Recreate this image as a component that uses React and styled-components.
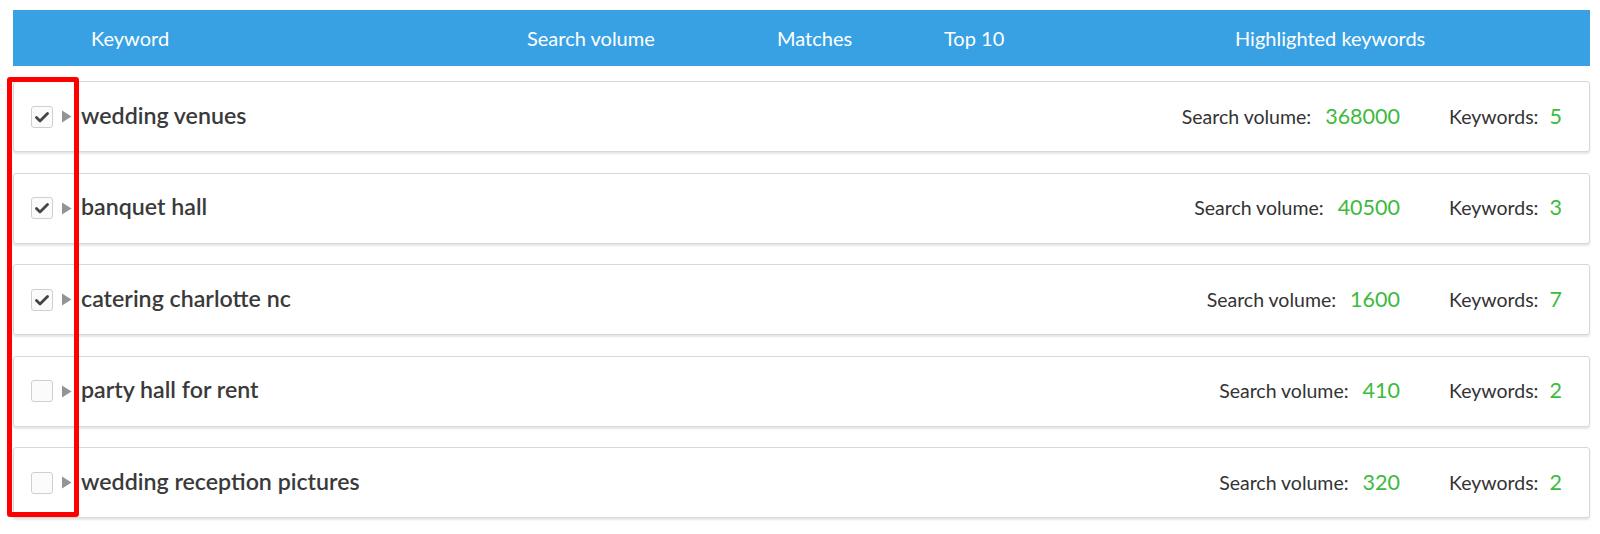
import React from 'react'
import styled, { createGlobalStyle } from 'styled-components'

const GlobalStyle = createGlobalStyle`
  body {
    margin: 0;
    background: #ffffff;
    font-family: "Lato", "Open Sans", sans-serif;
  }
`

const Page = styled.div`
  padding: 10px 10px 0 13px;
`

const Header = styled.div`
  display: grid;
  grid-template-columns: 514px 250px 167px 291px 1fr;
  align-items: center;
  height: 56px;
  background: #38a1e4;
  color: #ffffff;
  font-size: 20px;
`

const HeadCell = styled.div`
  padding-left: ${props => props.$indent || 0}px;
  white-space: nowrap;
`

const List = styled.div`
  position: relative;
  padding-top: 15px;
`

const Card = styled.div`
  display: flex;
  align-items: center;
  height: 71px;
  box-sizing: border-box;
  margin-bottom: 20.5px;
  padding: 0 29px 0 17px;
  background: #ffffff;
  border: 1px solid #d8d8d8;
  border-radius: 3px;
  box-shadow: 0 2px 2px rgba(0, 0, 0, 0.1);
`

const Checkbox = styled.span`
  display: flex;
  align-items: center;
  justify-content: center;
  width: 22px;
  height: 22px;
  box-sizing: border-box;
  border: 1px solid #cfcfcf;
  border-radius: 3px;
  background: #fbfbfb;
`

const Caret = styled.svg`
  margin: 0 9px 0 8px;
  flex-shrink: 0;
`

const Name = styled.div`
  flex: 1;
  font-size: 23.2px;
  font-weight: 600;
  color: #3a3a3a;
  margin-top: -4px;
`

const Stat = styled.div`
  display: flex;
  align-items: baseline;
  justify-content: ${props => (props.$end ? 'flex-end' : 'flex-start')};
  width: ${props => props.$width}px;
  margin-left: ${props => props.$gap || 0}px;
  color: #333333;
  font-size: 19.5px;
  margin-top: -2px;
`

const Value = styled.span`
  margin-left: ${props => props.$space || 14}px;
  color: #3dba3d;
  font-size: 21.5px;
`

const Highlight = styled.div`
  position: absolute;
  left: -6px;
  top: 11px;
  width: 72px;
  height: 440px;
  box-sizing: border-box;
  border: 5px solid #ff0000;
  border-radius: 3px;
  pointer-events: none;
`

const rows = [
  { name: 'wedding venues', volume: 368000, keywords: 5, checked: true },
  { name: 'banquet hall', volume: 40500, keywords: 3, checked: true },
  { name: 'catering charlotte nc', volume: 1600, keywords: 7, checked: true },
  { name: 'party hall for rent', volume: 410, keywords: 2, checked: false },
  { name: 'wedding reception pictures', volume: 320, keywords: 2, checked: false },
]

const Check = () => (
  <svg width="14" height="12" viewBox="0 0 14 12">
    <path d="M1.5 6.5 L5 10 L12.5 2.5" fill="none" stroke="#444444" strokeWidth="2.8" strokeLinecap="round" strokeLinejoin="round" />
  </svg>
)

const App = () => {
  return (
    <Page>
      <GlobalStyle />
      <Header>
        <HeadCell $indent={78}>Keyword</HeadCell>
        <HeadCell>Search volume</HeadCell>
        <HeadCell>Matches</HeadCell>
        <HeadCell>Top 10</HeadCell>
        <HeadCell>Highlighted keywords</HeadCell>
      </Header>
      <List>
        {rows.map(row => (
          <Card key={row.name}>
            <Checkbox>{row.checked && <Check />}</Checkbox>
            <Caret width="11" height="13" viewBox="0 0 11 13">
              <path d="M1 0.5 L10.5 6.5 L1 12.5 Z" fill="#949494" />
            </Caret>
            <Name>{row.name}</Name>
            <Stat $end $width={300}>
              Search volume:<Value>{row.volume}</Value>
            </Stat>
            <Stat $width={111} $gap={49}>
              Keywords:<Value $space={11}>{row.keywords}</Value>
            </Stat>
          </Card>
        ))}
        <Highlight />
      </List>
    </Page>
  )
}

export default App
